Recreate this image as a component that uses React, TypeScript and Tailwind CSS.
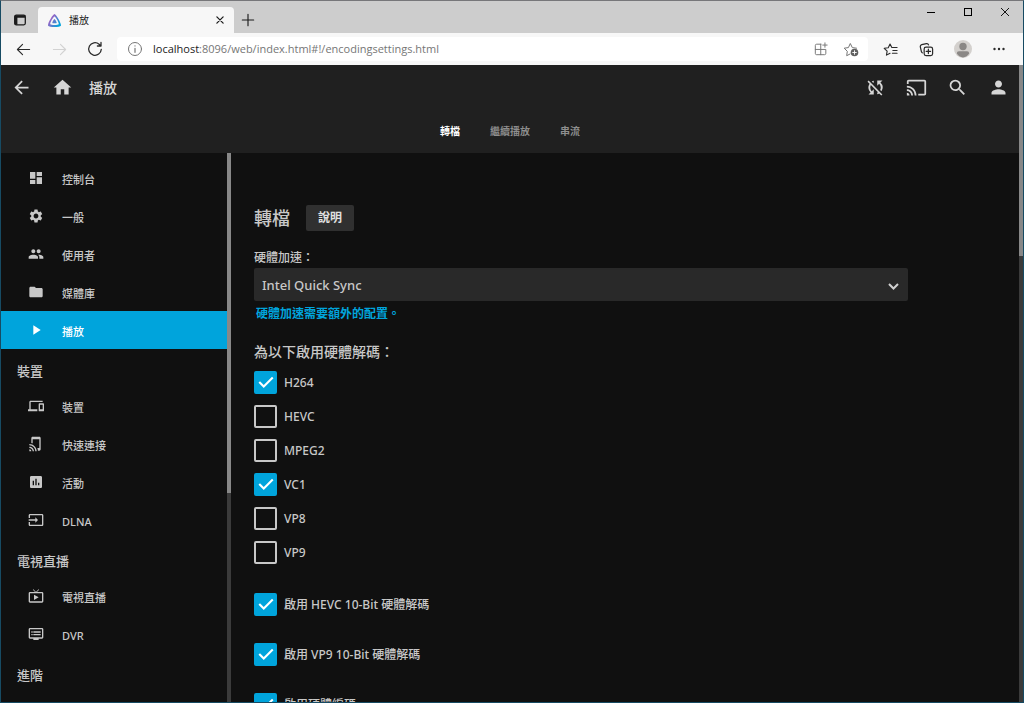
import { useState } from 'react';
import type { ReactNode } from 'react';
import type { IconType } from 'react-icons';
import {
  MdArrowBack,
  MdAssessment,
  MdCast,
  MdDashboard,
  MdDevices,
  MdDvr,
  MdFolder,
  MdHome,
  MdInput,
  MdLiveTv,
  MdPeople,
  MdPerson,
  MdPlayArrow,
  MdSearch,
  MdSettings,
  MdSyncDisabled,
  MdTapAndPlay,
} from 'react-icons/md';

interface NavItem {
  label: string;
  icon: IconType;
  active?: boolean;
}

interface NavSection {
  title?: string;
  items: NavItem[];
}

const navSections: NavSection[] = [
  {
    items: [
      { label: '控制台', icon: MdDashboard },
      { label: '一般', icon: MdSettings },
      { label: '使用者', icon: MdPeople },
      { label: '媒體庫', icon: MdFolder },
      { label: '播放', icon: MdPlayArrow, active: true },
    ],
  },
  {
    title: '裝置',
    items: [
      { label: '裝置', icon: MdDevices },
      { label: '快速連接', icon: MdTapAndPlay },
      { label: '活動', icon: MdAssessment },
      { label: 'DLNA', icon: MdInput },
    ],
  },
  {
    title: '電視直播',
    items: [
      { label: '電視直播', icon: MdLiveTv },
      { label: 'DVR', icon: MdDvr },
    ],
  },
  { title: '進階', items: [] },
];

const tabs = ['轉檔', '繼續播放', '串流'];

const codecs = [
  { label: 'H264', enabled: true },
  { label: 'HEVC', enabled: false },
  { label: 'MPEG2', enabled: false },
  { label: 'VC1', enabled: true },
  { label: 'VP8', enabled: false },
  { label: 'VP9', enabled: false },
];

const extraOptions = ['啟用 HEVC 10-Bit 硬體解碼', '啟用 VP9 10-Bit 硬體解碼', '啟用硬體編碼'];

function LineIcon({ className, children }: { className: string; children: ReactNode }) {
  return (
    <svg
      className={className}
      viewBox="0 0 16 16"
      fill="none"
      stroke="currentColor"
      strokeLinecap="round"
      strokeLinejoin="round"
    >
      {children}
    </svg>
  );
}

function JellyfinLogo() {
  return (
    <svg className="size-[13px]" viewBox="0 0 24 24">
      <defs>
        <linearGradient id="jellyfin" x1="3" y1="8" x2="21" y2="20" gradientUnits="userSpaceOnUse">
          <stop offset="0" stopColor="#aa5cc3" />
          <stop offset="1" stopColor="#00a4dc" />
        </linearGradient>
      </defs>
      <path
        fill="url(#jellyfin)"
        d="M12 .002C8.826.002-1.398 18.537.16 21.666c1.56 3.129 22.14 3.094 23.682 0C25.384 18.573 15.177 0 12 0zm7.76 18.949c-1.008 2.028-14.493 2.05-15.514 0C3.224 16.9 9.92 4.755 12.003 4.755c2.081 0 8.77 12.166 7.759 14.196zM12 9.198c-1.054 0-4.446 6.15-3.93 7.189.518 1.04 7.348 1.027 7.86 0 .511-1.027-2.874-7.19-3.93-7.19z"
      />
    </svg>
  );
}

function TabStrip() {
  return (
    <div className="flex h-8 shrink-0 bg-[#cdcdcd] text-[#1b1b1b]">
      <button aria-label="Tab actions" className="flex w-[37px] items-center justify-center pt-[6px]">
        <svg className="size-3" viewBox="0 0 12 12">
          <rect x="0.7" y="1.2" width="10.6" height="9.6" rx="1.5" fill="none" stroke="currentColor" strokeWidth="1.3" />
          <path d="M.7 1.2h10.6v2.6H3.4v7H.7z" fill="currentColor" />
        </svg>
      </button>
      <div className="mt-[6px] flex w-[196px] items-center rounded-t bg-[#f7f7f7] pl-[10px] pr-2">
        <JellyfinLogo />
        <span className="ml-2 flex-1 text-[10px] leading-4">播放</span>
        <button aria-label="Close tab" className="flex size-3 items-center justify-center">
          <LineIcon className="size-[10px]">
            <path d="M3 3l10 10M13 3L3 13" strokeWidth="2" />
          </LineIcon>
        </button>
      </div>
      <button aria-label="New tab" className="ml-1 flex w-5 items-center justify-center pt-[6px]">
        <LineIcon className="size-[14px]">
          <path d="M8 1.5v13M1.5 8h13" strokeWidth="1.3" />
        </LineIcon>
      </button>
      <div className="ml-auto flex h-[22px] text-black">
        <button aria-label="Minimize" className="flex w-[37px] items-center justify-center">
          <svg className="size-[10px]" viewBox="0 0 10 10">
            <path d="M1 5.5h8" stroke="currentColor" />
          </svg>
        </button>
        <button aria-label="Maximize" className="flex w-[37px] items-center justify-center">
          <svg className="size-[10px]" viewBox="0 0 10 10">
            <rect x="1.5" y="1.5" width="7" height="7" fill="none" stroke="currentColor" />
          </svg>
        </button>
        <button aria-label="Close" className="flex w-[37px] items-center justify-center">
          <svg className="size-[10px]" viewBox="0 0 10 10">
            <path d="M1 1l8 8M9 1L1 9" stroke="currentColor" strokeWidth="0.9" />
          </svg>
        </button>
      </div>
    </div>
  );
}

function AddressBar() {
  return (
    <div className="flex h-8 shrink-0 items-center bg-[#f7f7f7] pr-[3px] pl-1 text-[#2b2b2b]">
      <button aria-label="Back" className="flex w-9 justify-center">
        <LineIcon className="size-[15px]">
          <path d="M14.5 8h-13M7 2.5L1.5 8 7 13.5" strokeWidth="1.2" />
        </LineIcon>
      </button>
      <button aria-label="Forward" disabled className="flex w-9 justify-center text-[#d2d2d2]">
        <LineIcon className="size-[15px]">
          <path d="M1.5 8h13M9 2.5L14.5 8 9 13.5" strokeWidth="1.2" />
        </LineIcon>
      </button>
      <button aria-label="Refresh" className="flex w-9 justify-center">
        <LineIcon className="size-4">
          <path d="M14.3 8.3a6.3 6.3 0 1 1-2.2-5.1L14 5M14 1.5V5h-3.6" strokeWidth="1.3" />
        </LineIcon>
      </button>
      <div className="ml-1 flex h-6 flex-1 items-center rounded bg-white pl-[10px] pr-[2px] text-[#767676]">
        <LineIcon className="size-4">
          <circle cx="8" cy="8" r="6.5" />
          <path d="M8 7.3v4M8 4.8v.2" strokeWidth="1.2" />
        </LineIcon>
        <p className="ml-[10px] flex-1 font-['Open_Sans','Noto_Sans',sans-serif] text-[11px] leading-4">
          <span className="text-[#1b1b1b]">localhost</span>:8096/web/index.html#!/encodingsettings.html
        </p>
        <button aria-label="Install app" className="flex w-[30px] justify-center">
          <LineIcon className="size-[14px]">
            <path d="M8 2.5H3A1.5 1.5 0 0 0 1.5 4v9A1.5 1.5 0 0 0 3 14.5h9a1.5 1.5 0 0 0 1.5-1.5V8.5H1.5M7.7 2.5v12M12.5 1v5M10 3.500h5" strokeWidth="1.1" />
          </LineIcon>
        </button>
        <button aria-label="Add to favorites" className="flex w-[30px] justify-center">
          <LineIcon className="size-4">
            <path d="M7 13l-3.3 1.7.6-4.4L1.2 7.2l4.2-.6L7.3 2.5l2 4.1 4.2.6" strokeWidth="1" />
            <circle cx="11.5" cy="11.5" r="3.8" fill="#5f5f5f" stroke="none" />
            <path d="M11.5 9.7v3.6M9.7 11.5h3.6" stroke="#fff" strokeWidth="0.9" />
          </LineIcon>
        </button>
      </div>
      <div className="ml-1 flex items-center">
        <button aria-label="Favorites" className="flex w-9 justify-center">
          <LineIcon className="size-[15px]">
            <path d="M7.5 12l-3.8 2 .7-4.3L1.3 6.7l4.3-.6 1.9-3.9 1.9 3.6H15M10.500 9H15M10 12h5" strokeWidth="1.2" />
          </LineIcon>
        </button>
        <button aria-label="Collections" className="flex w-9 justify-center">
          <LineIcon className="size-[15px]">
            <rect x="5.5" y="5.5" width="9" height="9" rx="2" strokeWidth="1.3" />
            <path d="M10 7.7v4.6M7.7 10h4.6M3.5 11.5A2.5 2.5 0 0 1 2.5 10L1.4 5.300a2 2 0 0 1 1.500-2.400l5-1.200a2 2 0 0 1 2.300 1.400" strokeWidth="1.3" />
          </LineIcon>
        </button>
        <button aria-label="Profile" className="flex w-[38px] justify-center">
          <svg className="size-[18px]" viewBox="0 0 18 18">
            <circle cx="9" cy="9" r="9" fill="#d3d0cd" />
            <circle cx="9" cy="6.5" r="3.7" fill="#8a8785" />
            <path d="M2.8 13.5Q2.8 11.3 5 11.3h8q2.2 0 2.2 2.2A8.5 8.5 0 0 1 9 17.5a8.5 8.5 0 0 1-6.2-4z" fill="#8a8785" />
          </svg>
        </button>
        <button aria-label="More" className="flex w-[38px] justify-center pr-1">
          <svg className="size-4" viewBox="0 0 16 16" fill="currentColor">
            <circle cx="3.5" cy="8" r="1.2" />
            <circle cx="8" cy="8" r="1.2" />
            <circle cx="12.5" cy="8" r="1.2" />
          </svg>
        </button>
      </div>
    </div>
  );
}

function HeaderButton({ label, icon: Icon }: { label: string; icon: IconType }) {
  return (
    <button aria-label={label} className="flex w-[41px] items-center justify-center">
      <Icon className="size-[21px]" />
    </button>
  );
}

function AppHeader() {
  return (
    <header className="bg-[#202020] text-[#d6d6d6]">
      <div className="flex h-[45px] items-center">
        <HeaderButton label="返回" icon={MdArrowBack} />
        <HeaderButton label="首頁" icon={MdHome} />
        <h1 className="ml-[6px] text-[14px] leading-5 font-medium">播放</h1>
        <div className="ml-auto flex">
          <HeaderButton label="SyncPlay" icon={MdSyncDisabled} />
          <HeaderButton label="Cast" icon={MdCast} />
          <HeaderButton label="搜尋" icon={MdSearch} />
          <HeaderButton label="使用者" icon={MdPerson} />
        </div>
      </div>
      <nav className="flex h-[43px] items-center justify-center text-[10px] font-bold">
        {tabs.map((tab, i) => (
          <a key={tab} href="#" className={i === 0 ? 'px-[15px] text-white' : 'px-[15px] text-[#8e8e8e]'}>
            {tab}
          </a>
        ))}
      </nav>
    </header>
  );
}

function Sidebar() {
  return (
    <aside className="flex w-[230px] shrink-0">
      <nav className="flex-1 overflow-hidden pt-[6px]">
        {navSections.map((section, i) => (
          <div key={i}>
            {section.title && (
              <h3 className="flex h-[38px] items-center pt-[7px] pl-4 text-[13px] font-medium">{section.title}</h3>
            )}
            {section.items.map(({ label, icon: Icon, active }) => (
              <a
                key={label}
                href="#"
                className={
                  active
                    ? 'flex h-[38px] items-center bg-[#00a4dc] pl-[27px] text-white'
                    : 'flex h-[38px] items-center pl-[27px]'
                }
              >
                <Icon className="size-4" />
                <span className="ml-[18px] pt-[3px] text-[11px] leading-4 font-medium">{label}</span>
              </a>
            ))}
          </div>
        ))}
      </nav>
      <div className="w-1 bg-[#3b3b3b]">
        <div className="h-[62%] bg-[#888]" />
      </div>
    </aside>
  );
}

function Checkbox({ label, defaultChecked }: { label: string; defaultChecked: boolean }) {
  const [checked, setChecked] = useState(defaultChecked);

  return (
    <label className="flex items-center">
      <span className="grid size-[23px] place-items-center">
        <input
          type="checkbox"
          checked={checked}
          onChange={(e) => setChecked(e.target.checked)}
          className="col-start-1 row-start-1 size-[23px] appearance-none rounded-xs border-2 border-[#c8c8c8] checked:border-[#00a4dc] checked:bg-[#00a4dc]"
        />
        {checked && (
          <svg className="pointer-events-none col-start-1 row-start-1 size-[18px]" viewBox="0 0 24 24">
            <path d="M3 12l6 6L21 6" fill="none" stroke="#fff" strokeWidth="2.8" />
          </svg>
        )}
      </span>
      <span className="ml-[7px] pt-[2px] text-[12px] leading-4 font-medium">{label}</span>
    </label>
  );
}

function EncodingSettings() {
  return (
    <main className="flex-1 overflow-hidden px-[23px] pt-[52px]">
      <form className="max-w-[654px]">
        <div className="flex items-center">
          <h2 className="text-[18px] leading-6 font-medium">轉檔</h2>
          <button type="button" className="ml-4 h-[26px] rounded-xs bg-[#303030] px-3 text-[12px] font-bold text-[#e0e0e0]">
            說明
          </button>
        </div>

        <label htmlFor="hwaccel" className="mt-[19px] mb-[2px] block text-[12px] leading-4 font-medium">
          硬體加速：
        </label>
        <div className="grid items-center">
          <select
            id="hwaccel"
            className="col-start-1 row-start-1 h-[33px] w-full appearance-none rounded-xs bg-[#292929] px-2 pt-[2px] text-[13px] font-medium"
          >
            <option>Intel Quick Sync</option>
          </select>
          <svg className="pointer-events-none col-start-1 row-start-1 mt-1 mr-[9px] h-[7px] w-[11px] justify-self-end" viewBox="0 0 11 7">
            <path d="M1 1l4.5 4.5L10 1" fill="none" stroke="#d0d0d0" strokeWidth="2" />
          </svg>
        </div>
        <a href="#" className="mt-[5px] ml-[2px] block text-[12px] leading-4 font-bold text-[#00a4dc]">
          硬體加速需要額外的配置。
        </a>

        <h3 className="mt-5 mb-[3px] text-[14px] leading-5 font-medium">為以下啟用硬體解碼：</h3>
        {codecs.map(({ label, enabled }) => (
          <div key={label} className="flex h-[34px] items-center">
            <Checkbox label={label} defaultChecked={enabled} />
          </div>
        ))}

        <div className="mt-[10px]">
          {extraOptions.map((label) => (
            <div key={label} className="flex h-[50px] items-center">
              <Checkbox label={label} defaultChecked />
            </div>
          ))}
        </div>
      </form>
    </main>
  );
}

export default function App() {
  return (
    <div className="flex h-screen flex-col overflow-hidden border border-[#174b63] border-t-[#77777a] font-['Noto_Sans','Noto_Sans_CJK_TC',sans-serif]">
      <TabStrip />
      <AddressBar />
      <div className="flex min-h-0 flex-1 bg-[#101010] text-[#c8c8c8]">
        <div className="flex min-w-0 flex-1 flex-col">
          <AppHeader />
          <div className="flex min-h-0 flex-1">
            <Sidebar />
            <EncodingSettings />
          </div>
        </div>
        <div className="w-1 bg-[#3b3b3b]">
          <div className="h-[30%] bg-[#888]" />
        </div>
      </div>
    </div>
  );
}
